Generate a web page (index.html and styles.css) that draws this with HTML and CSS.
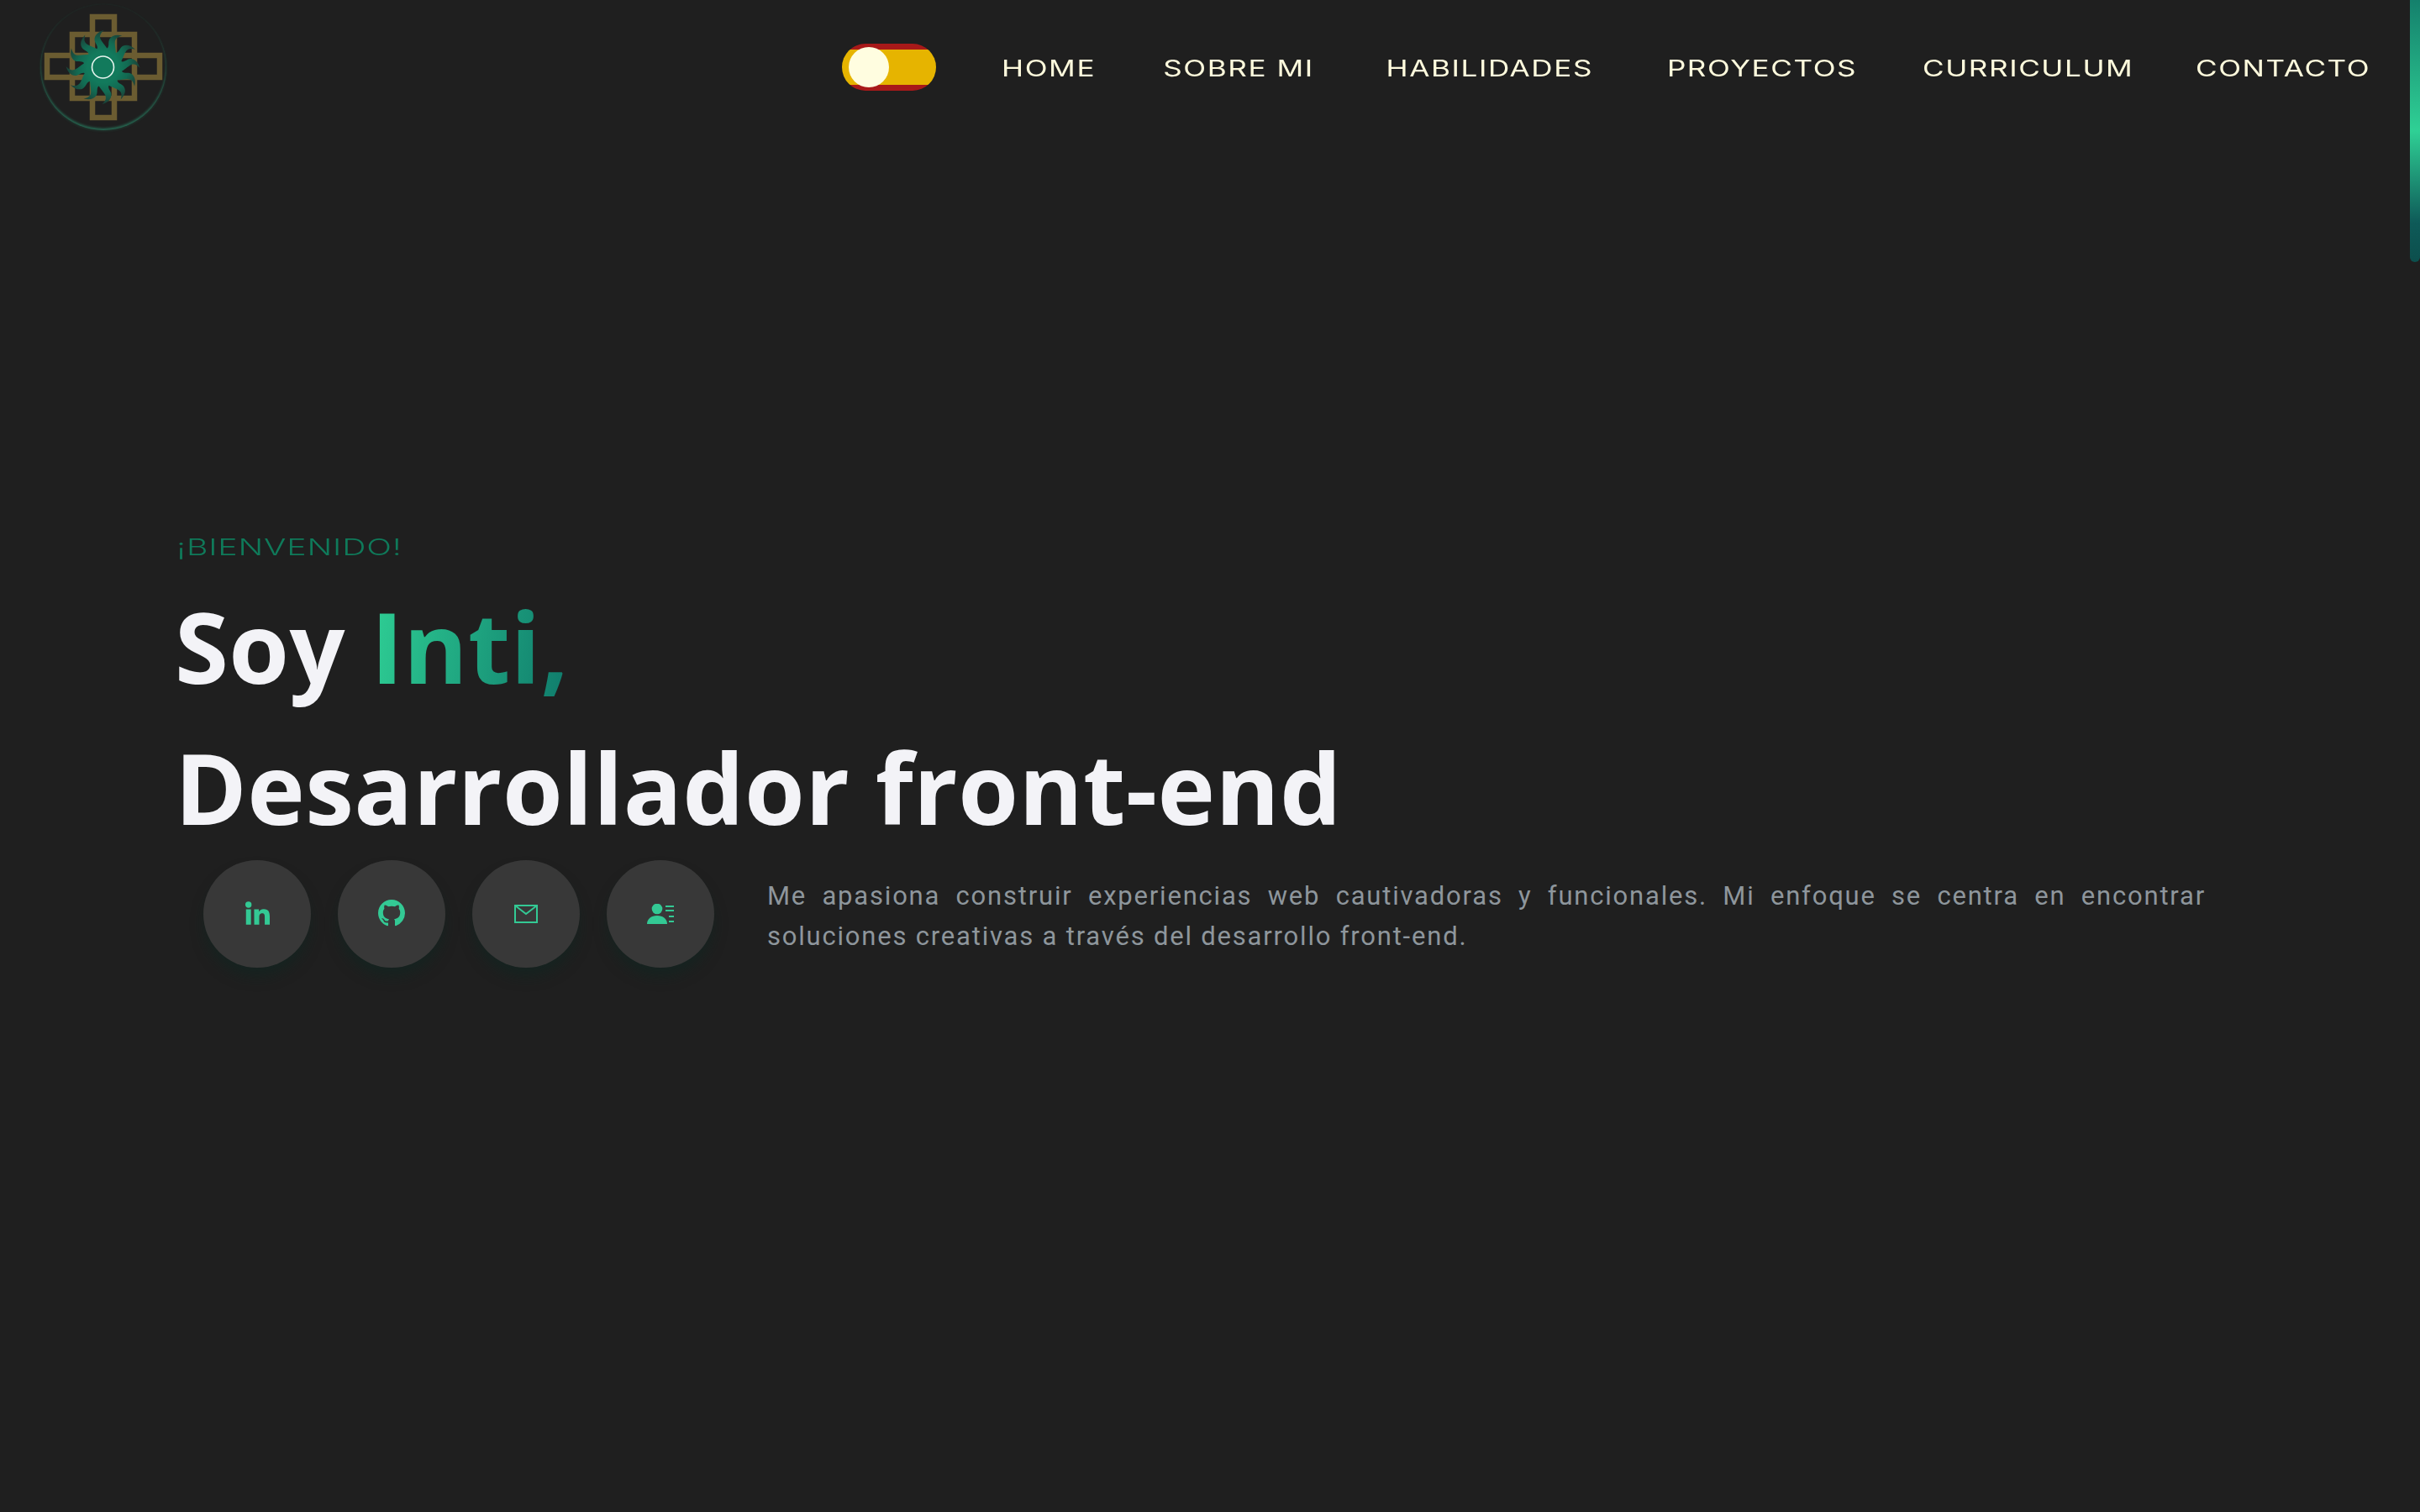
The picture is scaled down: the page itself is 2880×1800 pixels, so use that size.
FILE: index.html
```html
<!DOCTYPE html>
<html lang="es">
<head>
<meta charset="utf-8">
<title>Inti</title>
<link rel="stylesheet" href="styles.css">
</head>
<body>
<svg class="defs" width="0" height="0" aria-hidden="true">
  <defs>
    <linearGradient id="rayfill" x1="0" y1="-18" x2="0" y2="-44" gradientUnits="userSpaceOnUse">
      <stop offset="0" stop-color="#127a5c"/>
      <stop offset="0.45" stop-color="#126a52"/>
      <stop offset="1" stop-color="#1c3f36"/>
    </linearGradient>
    <path id="ray" d="M-8 -20 C-4 -25 -10 -28 -10 -33 C-10 -38 -6 -42 1 -44 C-3 -40 -5 -37 -2 -32 C1 -27 4 -25 7 -18 Z" fill="url(#rayfill)"/>
  </defs>
</svg>
<header class="topbar">
  <a class="logo" href="#">
    <svg viewBox="0 0 150 150" width="150" height="150">
      <g fill="none" stroke="#6b5c31" stroke-width="6.500">
        <rect x="62" y="15" width="26" height="120"/>
        <rect x="8" y="61" width="134" height="26"/>
        <rect x="38" y="36" width="74" height="76"/>
      </g>
      <g transform="translate(74.500 75)">
        <circle r="23" fill="#127a5c"/>
        <use href="#ray" transform="rotate(0)"/>
        <use href="#ray" transform="rotate(30)"/>
        <use href="#ray" transform="rotate(60)"/>
        <use href="#ray" transform="rotate(90)"/>
        <use href="#ray" transform="rotate(120)"/>
        <use href="#ray" transform="rotate(150)"/>
        <use href="#ray" transform="rotate(180)"/>
        <use href="#ray" transform="rotate(210)"/>
        <use href="#ray" transform="rotate(240)"/>
        <use href="#ray" transform="rotate(270)"/>
        <use href="#ray" transform="rotate(300)"/>
        <use href="#ray" transform="rotate(330)"/>
        <circle r="13" fill="#127a5c" stroke="#e6f5ee" stroke-width="1.600"/>
      </g>
    </svg>
  </a>
  <nav class="nav">
    <div class="flag"><span class="knob"></span></div>
    <a class="link link-home" href="#"><span>HOME</span></a>
    <a class="link link-about" href="#"><span>SOBRE MI</span></a>
    <a class="link link-skills" href="#"><span>HABILIDADES</span></a>
    <a class="link link-projects" href="#"><span>PROYECTOS</span></a>
    <a class="link link-cv" href="#"><span>CURRICULUM</span></a>
    <a class="link link-contact" href="#"><span>CONTACTO</span></a>
  </nav>
</header>
<main class="hero">
  <p class="welcome"><span>¡BIENVENIDO!</span></p>
  <h1 class="title">Soy <span class="name">Inti,</span><br>Desarrollador front-end</h1>
  <div class="about">
    <div class="socials">
      <a class="social" href="#">
        <svg class="up" viewBox="2.500 3.500 19.500 18.500" width="29" height="28"><path fill="#33c994" d="M4.980 3.500a2.500 2.500 0 1 1 0 5 2.500 2.500 0 0 1 0-5zM3 9.800h4V22H3zM9.500 9.800h3.800v1.700h.1c.5-1 1.800-2 3.800-2 4 0 4.800 2.600 4.800 6V22h-4v-5.800c0-1.400 0-3.200-2-3.200s-2.400 1.500-2.400 3.100V22h-4z"/></svg>
      </a>
      <a class="social" href="#">
        <svg class="up" viewBox="0 0 16 16" width="32" height="32"><path fill="#33c994" d="M8 0C3.580 0 0 3.580 0 8c0 3.540 2.290 6.530 5.470 7.590.4.070.55-.17.55-.38 0-.19-.01-.82-.01-1.490-2.010.37-2.530-.49-2.690-.94-.09-.23-.48-.94-.82-1.130-.28-.15-.68-.52-.01-.53.63-.01 1.080.58 1.230.82.72 1.210 1.870.87 2.330.66.07-.52.28-.87.51-1.070-1.780-.2-3.640-.89-3.640-3.950 0-.87.31-1.590.82-2.150-.08-.2-.36-1.020.08-2.120 0 0 .67-.21 2.200.82.64-.18 1.320-.27 2-.27s1.360.09 2 .27c1.530-1.040 2.200-.82 2.200-.82.44 1.100.16 1.920.08 2.120.51.56.82 1.270.82 2.150 0 3.070-1.870 3.750-3.650 3.950.29.25.54.73.54 1.480 0 1.070-.01 1.930-.01 2.200 0 .21.15.46.55.38A8.010 8.010 0 0 0 16 8c0-4.420-3.580-8-8-8z"/></svg>
      </a>
      <a class="social" href="#">
        <svg viewBox="0 0 28 22" width="28" height="22"><path fill="none" stroke="#33c994" stroke-width="2" d="M1 1h26v20H1zM1 1l13 10L27 1"/></svg>
      </a>
      <a class="social" href="#">
        <svg viewBox="0 0 32 24" width="32" height="24"><g fill="#33c994"><circle cx="12" cy="6" r="6.300"/><path d="M0 24c0-6 5-10 12-10s12 4 12 10z"/><rect x="22" y="2" width="10" height="2"/><rect x="22" y="7" width="10" height="2"/><rect x="26" y="14" width="6" height="2"/><rect x="26" y="20" width="6" height="2"/></g></svg>
      </a>
    </div>
    <p class="intro">Me apasiona construir experiencias web cautivadoras y funcionales. Mi enfoque se centra en encontrar soluciones creativas a través del desarrollo front-end.</p>
  </div>
</main>
<div class="scrollthumb"></div>
</body>
</html>
```

FILE: styles.css
```css
* { box-sizing: border-box; }
html, body { margin: 0; height: 100%; }
body {
  background: #1f1f1f;
  font-family: "Roboto", "Noto Sans", sans-serif;
  overflow: hidden;
  height: 1800px;
}
.defs { position: absolute; }
.topbar {
  display: flex;
  justify-content: space-between;
  align-items: center;
  height: 160px;
  padding: 0 60px 0 48px;
}
.logo {
  display: block;
  width: 150px;
  height: 150px;
  border-radius: 50%;
  box-shadow: inset 0 -2px 3px rgba(47, 200, 148, .45), 0 1px 3px rgba(47, 200, 148, .15);
}
.logo svg { display: block; filter: blur(.5px); }
.nav {
  display: flex;
  align-items: center;
  gap: 80px;
}
.link {
  display: flex;
  justify-content: center;
  padding-top: 3px;
  color: #fffbdd;
  font-family: "Inter", sans-serif;
  font-weight: 400;
  font-size: 27px;
  letter-spacing: 1.2px;
  line-height: 40px;
  text-decoration: none;
  white-space: nowrap;
}
.link span {
  display: block;
  flex: none;
  transform: scaleX(1.3);
}
.link-home { width: 109px; }
.link-about { width: 183px; }
.link-skills { width: 254px; }
.link-projects { width: 234px; }
.link-cv { width: 240px; }
.link-contact { width: 206px; }
.flag {
  width: 112px;
  height: 56px;
  border-radius: 28px;
  background: linear-gradient(#a81919 0 7px, #e6b400 7px 49px, #a81919 49px);
  padding: 4px 0 0 8px;
}
.knob {
  display: block;
  width: 48px;
  height: 48px;
  border-radius: 50%;
  background: #fffde0;
}
.hero {
  padding: 472px 255px 0 210px;
}
.welcome {
  margin: 0 0 13px;
  color: #0f7a5a;
  font-family: "Inter", sans-serif;
  font-weight: 300;
  font-size: 27px;
  letter-spacing: .6px;
  line-height: 40px;
}
.welcome span {
  display: inline-block;
  transform: scaleX(1.45);
  transform-origin: left center;
}
.title {
  margin: 0 0 3px -2px;
  color: #f3f3f7;
  font-family: "Open Sans", sans-serif;
  font-weight: 700;
  font-size: 116px;
  line-height: 168px;
  letter-spacing: .4px;
}
.name {
  background: linear-gradient(100deg, #2fd095, #0f7a6b);
  -webkit-background-clip: text;
  background-clip: text;
  color: transparent;
}
.about {
  display: flex;
  align-items: flex-start;
  gap: 63px;
  padding-left: 32px;
}
.socials {
  display: flex;
  gap: 32px;
  flex: none;
}
.social {
  width: 128px;
  height: 128px;
  border-radius: 50%;
  background: #383838;
  display: flex;
  align-items: center;
  justify-content: center;
  box-shadow: 0 12px 16px -2px rgba(12, 40, 34, .5);
}
.up { margin-top: -2px; }
.intro {
  margin: 19px 0 0;
  color: #8e969c;
  font-family: "Roboto", sans-serif;
  font-weight: 400;
  font-size: 31px;
  letter-spacing: 1.8px;
  line-height: 48px;
  text-align: justify;
  flex: 1;
}
.scrollthumb {
  position: absolute;
  top: 0;
  right: 0;
  width: 12px;
  height: 312px;
  border-radius: 0 0 6px 6px;
  background: linear-gradient(#14806c, #2fd095 50%, #0e5a58 85%, #0c4f4d);
}
```
